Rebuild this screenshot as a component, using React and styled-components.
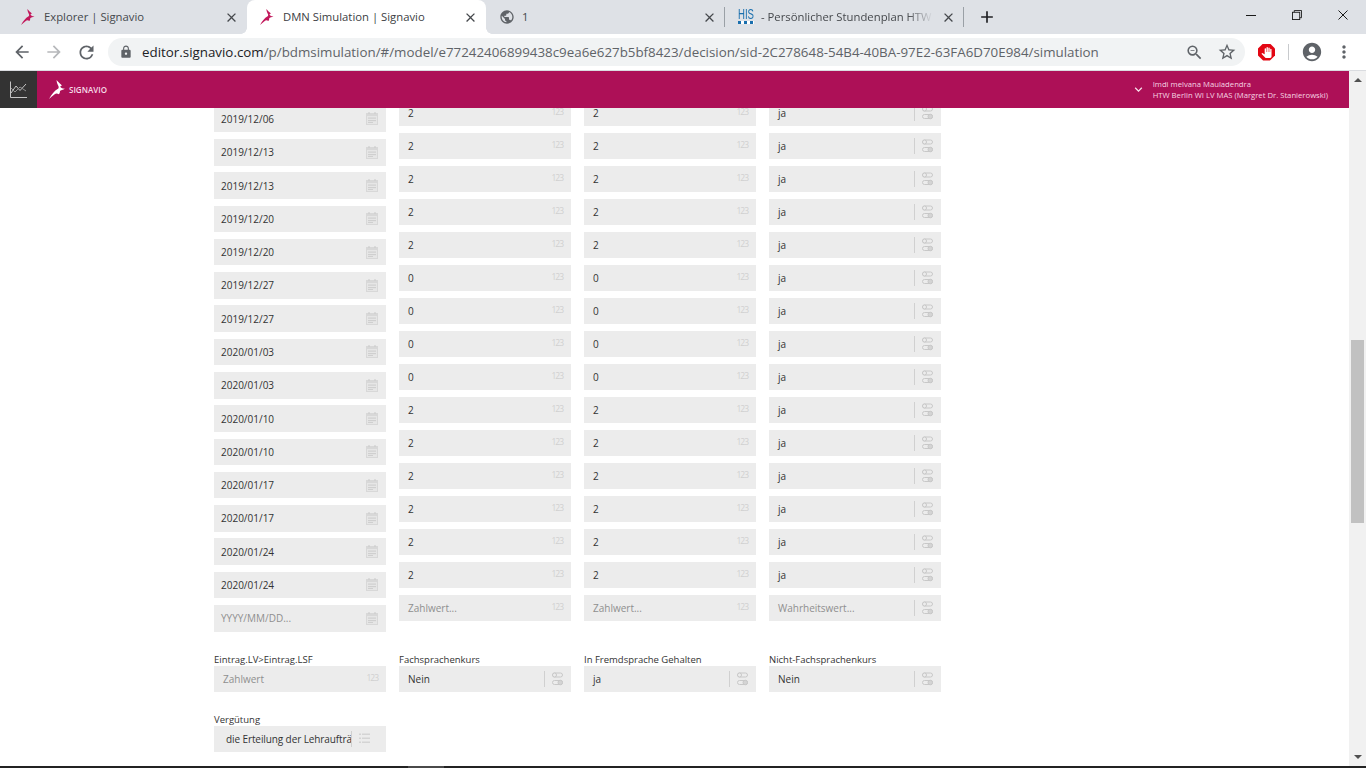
import React from 'react'
import styled, { createGlobalStyle } from 'styled-components'
import {
  MdArrowBack, MdArrowForward, MdRefresh, MdLock, MdStarBorder, MdAccountCircle,
  MdMoreVert, MdZoomOut, MdPublic, MdClose, MdAdd, MdExpandMore, MdPanTool
} from 'react-icons/md'

const dates = [
  '2019/12/06', '2019/12/13', '2019/12/13', '2019/12/20', '2019/12/20', '2019/12/27', '2019/12/27',
  '2020/01/03', '2020/01/03', '2020/01/10', '2020/01/10', '2020/01/17', '2020/01/17', '2020/01/24', '2020/01/24'
]
const numbers = ['2', '2', '2', '2', '2', '0', '0', '0', '0', '2', '2', '2', '2', '2', '2']
const flags = numbers.map(() => 'ja')

const Deer = ({ color, size }) => (
  <svg width={size} height={size} viewBox="0 0 20 20">
    <path
      fill={color}
      d="M0 20 C3 15 6 11 9 9.5 C10 9 10.5 8 10 6.5 C9 4.5 8 2.5 8 0 C9.5 2 11 3.2 12 4.2 C12.8 4.8 13.2 5.4 13.5 6 L11.8 6.5 C12.2 8 13.5 9 16.8 9.2 C14.5 10.5 12.5 10.8 11.5 11.5 C11.8 13 11 14 10.5 15 C8.5 13.8 7 14 6 15 C4 16.5 2 18.5 0 20 Z"
    />
  </svg>
)

const CalendarIcon = () => (
  <svg width="12" height="13" viewBox="0 0 12 13">
    <rect x="0" y="1" width="12" height="12" fill="#d8d8d8" />
    <rect x="2.5" y="0" width="1" height="2" fill="#c9c9c9" />
    <rect x="8.5" y="0" width="1" height="2" fill="#c9c9c9" />
    <rect x="1" y="4" width="10" height="8" fill="#e6e6e6" />
    <rect x="2" y="5.5" width="8" height="1.2" fill="#cfcfcf" />
    <rect x="2" y="8" width="8" height="1.2" fill="#cfcfcf" />
    <rect x="2" y="10" width="5" height="1" fill="#cfcfcf" />
  </svg>
)

const SlidersIcon = () => (
  <svg width="11" height="14" viewBox="0 0 11 14" fill="none" stroke="#c8c8c8" strokeWidth="1">
    <rect x="0.5" y="1" width="10" height="4" rx="2" />
    <circle cx="2.5" cy="3" r="2" fill="#ececec" />
    <rect x="0.5" y="8.5" width="10" height="4" rx="2" />
    <circle cx="8.3" cy="10.5" r="2.3" fill="#d4d4d4" />
  </svg>
)

const ListIcon = () => (
  <svg width="11" height="11" viewBox="0 0 11 11" fill="#d4d4d4">
    <rect x="0" y="0.5" width="2" height="1.5" />
    <rect x="3" y="0.5" width="8" height="1.5" />
    <rect x="0" y="4.5" width="2" height="1.5" />
    <rect x="3" y="4.5" width="8" height="1.5" />
    <rect x="0" y="8.5" width="2" height="1.5" />
    <rect x="3" y="8.5" width="8" height="1.5" />
  </svg>
)

const ChartIcon = () => (
  <svg width="17" height="17" viewBox="0 0 17 17" fill="none" stroke="#c4c4c4" strokeWidth="1">
    <path d="M0.5 0.5 V16.5 H17" />
    <path d="M1 12 L6 5 L10 9.5 L16 3" />
    <path d="M1 7 L5 11 L10 6 L16 10" stroke="#8f8f8f" />
  </svg>
)

const RestoreIcon = () => (
  <svg width="10" height="10" viewBox="0 0 11 11" fill="none" stroke="#1a1a1a" strokeWidth="1">
    <rect x="0.5" y="2.5" width="8" height="8" />
    <path d="M2.5 2.5 V0.5 H10.5 V8.5 H8.5" />
  </svg>
)

const MinimizeIcon = () => (
  <svg width="10" height="10" viewBox="0 0 10 10" stroke="#1a1a1a" strokeWidth="1">
    <path d="M0 5.5 H10" />
  </svg>
)

const WindowCloseIcon = () => (
  <svg width="10" height="10" viewBox="0 0 10 10" stroke="#1a1a1a" strokeWidth="1">
    <path d="M0.5 0.5 L9.5 9.5 M9.5 0.5 L0.5 9.5" />
  </svg>
)

const Field = ({ value, placeholder, kind, wide, dense }) => (
  <FieldBox $dense={dense}>
    <FieldText $placeholder={placeholder} $wide={wide} $pad={wide ? 12 : kind === 'date' ? 7 : 9}>
      {value || placeholder}
    </FieldText>
    {kind === 'date' && <IconSlot><CalendarIcon /></IconSlot>}
    {kind === 'number' && <NumberHint>123</NumberHint>}
    {kind === 'flag' && <IconSlot $divided><SlidersIcon /></IconSlot>}
    {kind === 'list' && <IconSlot $divided><ListIcon /></IconSlot>}
  </FieldBox>
)

const Labelled = ({ label, children }) => (
  <div>
    <FieldLabel>{label}</FieldLabel>
    {children}
  </div>
)

const Tab = ({ icon, title, active, divided, faded }) => (
  <TabBox $active={active} $divided={divided}>
    <Favicon>{icon}</Favicon>
    <TabTitle $faded={faded} $active={active}>{title}</TabTitle>
    <TabClose><MdClose size={15} /></TabClose>
  </TabBox>
)

const App = () => (
  <Root>
    <GlobalStyle />
    <TabStrip>
      <Tab icon={<Deer color="#c2185b" size={16} />} title="Explorer | Signavio" />
      <Tab icon={<Deer color="#c2185b" size={16} />} title="DMN Simulation | Signavio" active />
      <Tab icon={<MdPublic size={18} color="#5f6368" />} title="1" divided />
      <Tab
        icon={<HisLogo><HisText>HIS</HisText><HisDots /></HisLogo>}
        title="- Persönlicher Stundenplan HTW"
        divided
        faded
      />
      <NewTab><MdAdd size={20} /></NewTab>
      <WindowControls>
        <WindowButton><MinimizeIcon /></WindowButton>
        <WindowButton><RestoreIcon /></WindowButton>
        <WindowButton><WindowCloseIcon /></WindowButton>
      </WindowControls>
    </TabStrip>

    <Toolbar>
      <NavButton><MdArrowBack size={20} color="#5f6368" /></NavButton>
      <NavButton><MdArrowForward size={20} color="#b6b8bb" /></NavButton>
      <NavButton><MdRefresh size={21} color="#5f6368" /></NavButton>
      <Omnibox>
        <MdLock size={14} color="#5f6368" />
        <UrlText>
          <b>editor.signavio.com</b>/p/bdmsimulation/#/model/e77242406899438c9ea6e627b5bf8423/decision/sid-2C278648-54B4-40BA-97E2-63FA6D70E984/simulation
        </UrlText>
        <OmniIcons>
          <MdZoomOut size={19} color="#5f6368" />
          <MdStarBorder size={20} color="#5f6368" />
        </OmniIcons>
      </Omnibox>
      <ToolbarEnd>
        <StopBadge><MdPanTool size={11} color="#fff" /></StopBadge>
        <ToolbarDivider />
        <MdAccountCircle size={22} color="#5f6368" />
        <MoreSlot><MdMoreVert size={20} color="#5f6368" /></MoreSlot>
      </ToolbarEnd>
    </Toolbar>

    <Viewport>
      <Main>
        <AppHeader>
          <ChartTab><ChartIcon /></ChartTab>
          <Brand>
            <Deer color="#fff" size={19} />
            <BrandName>SIGNAVIO</BrandName>
          </Brand>
          <UserMenu>
            <MdExpandMore size={15} color="#f8e3ec" />
            <UserText>
              <div>Imdi melvana Mauladendra</div>
              <div>HTW Berlin WI LV MAS (Margret Dr. Stanierowski)</div>
            </UserText>
          </UserMenu>
        </AppHeader>

        <ScrollClip>
          <Sheet>
            <Columns>
              <Column $dates>
                {dates.map((d, i) => <Field key={i} value={d} kind="date" dense />)}
                <Field placeholder="YYYY/MM/DD..." kind="date" dense />
              </Column>
              <Column>
                {numbers.map((n, i) => <Field key={i} value={n} kind="number" />)}
                <Field placeholder="Zahlwert..." kind="number" />
              </Column>
              <Column>
                {numbers.map((n, i) => <Field key={i} value={n} kind="number" />)}
                <Field placeholder="Zahlwert..." kind="number" />
              </Column>
              <Column>
                {flags.map((f, i) => <Field key={i} value={f} kind="flag" />)}
                <Field placeholder="Wahrheitswert..." kind="flag" />
              </Column>
            </Columns>

            <ResultRow>
              <Labelled label="Eintrag.LV>Eintrag.LSF">
                <Field placeholder="Zahlwert" kind="number" />
              </Labelled>
              <Labelled label="Fachsprachenkurs"><Field value="Nein" kind="flag" /></Labelled>
              <Labelled label="In Fremdsprache Gehalten"><Field value="ja" kind="flag" /></Labelled>
              <Labelled label="Nicht-Fachsprachenkurs"><Field value="Nein" kind="flag" /></Labelled>
            </ResultRow>

            <ResultRow>
              <Labelled label="Vergütung">
                <Field value="die Erteilung der Lehraufträge" kind="list" wide />
              </Labelled>
            </ResultRow>
          </Sheet>
        </ScrollClip>
      </Main>

      <Scrollbar>
        <ArrowUp />
        <Track><Thumb /></Track>
        <ArrowDown />
      </Scrollbar>
    </Viewport>

    <Taskbar><TaskbarItem /></Taskbar>
  </Root>
)

export default App

const GlobalStyle = createGlobalStyle`
  html, body {
    margin: 0;
    padding: 0;
    height: 100%;
    overflow: hidden;
    background: #fff;
    font-family: "Open Sans", "Noto Sans", sans-serif;
  }
  * { box-sizing: border-box; }
`

const Root = styled.div`
  width: 1366px;
  height: 768px;
  display: flex;
  flex-direction: column;
  overflow: hidden;
`

/* browser chrome */
const TabStrip = styled.div`
  height: 34px;
  flex: none;
  display: flex;
  padding-left: 8px;
  background: #dee1e6;
`

const TabBox = styled.div`
  position: relative;
  width: 239px;
  flex: none;
  display: flex;
  align-items: center;
  padding: 0 8px 0 13px;
  gap: 7px;
  background: ${p => (p.$active ? '#fff' : 'transparent')};
  border-radius: ${p => (p.$active ? '8px 8px 0 0' : '0')};

  &::after {
    content: "";
    display: ${p => (p.$divided ? 'block' : 'none')};
    position: absolute;
    right: 0;
    top: 7px;
    height: 20px;
    width: 1px;
    background: #9aa0a6;
  }

  &::before {
    content: "";
    display: ${p => (p.$active ? 'block' : 'none')};
    position: absolute;
    left: -6px;
    right: -6px;
    bottom: 0;
    height: 6px;
    background:
      radial-gradient(circle at 0 0, #dee1e6 5.5px, #fff 6px) left bottom / 6px 6px no-repeat,
      radial-gradient(circle at 100% 0, #dee1e6 5.5px, #fff 6px) right bottom / 6px 6px no-repeat;
  }
`

const Favicon = styled.div`
  width: 16px;
  height: 16px;
  flex: none;
  display: flex;
  align-items: center;
  justify-content: center;
`

const TabTitle = styled.div`
  flex: 1;
  min-width: 0;
  font-size: 11.3px;
  line-height: 16px;
  white-space: nowrap;
  overflow: hidden;
  color: ${p => (p.$active ? '#3c4043' : '#45484c')};
  ${p => p.$faded && `
    -webkit-mask-image: linear-gradient(90deg, #000 85%, transparent 100%);
    mask-image: linear-gradient(90deg, #000 85%, transparent 100%);
  `}
`

const TabClose = styled.div`
  width: 16px;
  height: 16px;
  flex: none;
  display: flex;
  align-items: center;
  justify-content: center;
  color: #45484c;
`

const HisLogo = styled.div`
  width: 16px;
  margin-top: -2px;
`

const HisText = styled.div`
  font-family: "Liberation Sans", sans-serif;
  font-size: 15px;
  line-height: 12px;
  white-space: nowrap;
  color: #1a6fae;
  transform: scaleX(0.64);
  transform-origin: left center;
`

const HisDots = styled.div`
  height: 3px;
  margin-top: 1px;
  background: repeating-linear-gradient(90deg, #1a6fae 0 3px, #fff 3px 6px);
`

const NewTab = styled.div`
  width: 28px;
  margin-left: 9px;
  display: flex;
  align-items: center;
  justify-content: center;
  color: #202124;
`

const WindowControls = styled.div`
  margin-left: auto;
  display: flex;
  align-items: flex-start;
  padding-top: 9px;
`

const WindowButton = styled.div`
  width: 46px;
  height: 11px;
  display: flex;
  align-items: center;
  justify-content: center;
`

const Toolbar = styled.div`
  height: 37px;
  flex: none;
  display: flex;
  align-items: center;
  padding-left: 6px;
  background: #fff;
  border-bottom: 1px solid #dadce0;
`

const NavButton = styled.div`
  width: 32px;
  display: flex;
  justify-content: center;
`

const Omnibox = styled.div`
  width: 1137px;
  height: 28px;
  margin-left: 6px;
  padding: 0 8px 0 11px;
  display: flex;
  align-items: center;
  border-radius: 14px;
  background: #f1f3f4;
`

const UrlText = styled.div`
  flex: 1;
  margin-left: 9px;
  font-size: 13.35px;
  white-space: nowrap;
  overflow: hidden;
  color: #5f6368;

  b {
    font-weight: 400;
    color: #202124;
  }
`

const OmniIcons = styled.div`
  display: flex;
  align-items: center;
  gap: 13px;
`

const ToolbarEnd = styled.div`
  flex: 1;
  display: flex;
  align-items: center;
  padding-left: 13px;
`

const StopBadge = styled.div`
  width: 17px;
  height: 17px;
  display: flex;
  align-items: center;
  justify-content: center;
  background: #e30613;
  clip-path: polygon(30% 0, 70% 0, 100% 30%, 100% 70%, 70% 100%, 30% 100%, 0 70%, 0 30%);
`

const ToolbarDivider = styled.div`
  width: 1px;
  height: 16px;
  margin: 0 12px 0 13px;
  background: #c8cacd;
`

const MoreSlot = styled.div`
  display: flex;
  margin-left: 11px;
`

/* page */
const Viewport = styled.div`
  flex: 1;
  min-height: 0;
  display: flex;
`

const Main = styled.div`
  flex: 1;
  min-width: 0;
  display: flex;
  flex-direction: column;
`

const AppHeader = styled.div`
  height: 37px;
  flex: none;
  display: flex;
  align-items: center;
  background: #ad1057;
`

const ChartTab = styled.div`
  width: 37px;
  height: 100%;
  display: flex;
  align-items: center;
  justify-content: center;
  background: #333;
`

const Brand = styled.div`
  display: flex;
  align-items: center;
  margin-left: 12px;
  gap: 1px;
`

const BrandName = styled.div`
  font-size: 8px;
  font-weight: 600;
  color: #f6dbe7;
`

const UserMenu = styled.div`
  margin-left: auto;
  padding-right: 21px;
  display: flex;
  align-items: center;
  gap: 7px;
`

const UserText = styled.div`
  font-size: 7.7px;
  line-height: 11px;
  white-space: nowrap;
  color: #f6d5e3;
`

const ScrollClip = styled.div`
  flex: 1;
  min-height: 0;
  overflow: hidden;
`

const Sheet = styled.div`
  margin-top: -8px;
  padding-left: 214px;
  width: 941px;
  box-sizing: content-box;
`

const Columns = styled.div`
  display: flex;
  align-items: flex-start;
  gap: 13px;
`

const Column = styled.div`
  width: 172px;
  display: flex;
  flex-direction: column;
  gap: ${p => (p.$dates ? '6.69px' : '7px')};
  padding-top: ${p => (p.$dates ? '5.7px' : '0')};
`

const ResultRow = styled.div`
  display: grid;
  grid-template-columns: repeat(4, 172px);
  gap: 13px;
  margin-top: 21px;
`

const FieldLabel = styled.div`
  height: 13px;
  font-size: 9.5px;
  line-height: 13px;
  white-space: nowrap;
  color: #333;
`

const FieldBox = styled.div`
  height: ${p => (p.$dense ? '26.6px' : '26px')};
  display: flex;
  align-items: center;
  padding-right: 8px;
  background: #ececec;
`

const FieldText = styled.div`
  flex: ${p => (p.$wide ? 'none' : '1')};
  width: ${p => (p.$wide ? '137px' : 'auto')};
  min-width: 0;
  padding-left: ${p => p.$pad}px;
  font-size: 10px;
  line-height: 14px;
  letter-spacing: ${p => (p.$wide ? '-0.1px' : '0')};
  white-space: nowrap;
  overflow: hidden;
  color: ${p => (p.$placeholder ? '#8f8f8f' : '#333')};
`

const NumberHint = styled.div`
  flex: none;
  font-size: 8.5px;
  line-height: 10px;
  letter-spacing: -1px;
  margin-bottom: 2px;
  white-space: nowrap;
  color: #d0d0d0;
`

const IconSlot = styled.div`
  flex: none;
  display: flex;
  align-items: center;
  justify-content: center;
  height: 16px;
  ${p => p.$divided && `
    border-left: 1px solid #d0d0d0;
    padding-left: 7px;
  `}
`

/* scrollbar + taskbar */
const Scrollbar = styled.div`
  width: 17px;
  flex: none;
  display: flex;
  flex-direction: column;
  align-items: center;
  background: #f1f1f1;
`

const ArrowUp = styled.div`
  flex: none;
  margin: 7px 0 0;
  border-left: 4px solid transparent;
  border-right: 4px solid transparent;
  border-bottom: 4px solid #505050;
`

const Track = styled.div`
  flex: 1;
  width: 100%;
  padding: 258px 2px 0 2px;
`

const Thumb = styled.div`
  height: 183px;
  background: #c1c1c1;
`

const ArrowDown = styled.div`
  flex: none;
  margin-bottom: 7px;
  border-left: 4px solid transparent;
  border-right: 4px solid transparent;
  border-top: 4px solid #505050;
`

const Taskbar = styled.div`
  height: 2px;
  flex: none;
  padding-left: 408px;
  background: #232323;
`

const TaskbarItem = styled.div`
  width: 36px;
  height: 2px;
  background: #4a4a4a;
`
